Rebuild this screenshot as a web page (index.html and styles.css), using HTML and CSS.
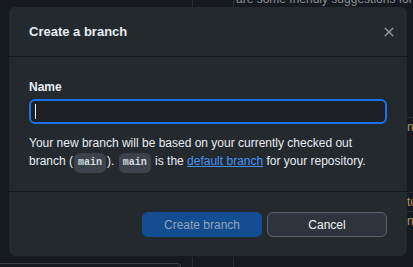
FILE: index.html
```html
<!DOCTYPE html>
<html>
  <head>
    <title>Create a branch</title>
    <link rel="stylesheet" href="styles.css">
  </head>
  <body>
    <!-- page behind the dialog -->
    <div class="backdrop">
      <div class="top-row">
        <div class="col col-a"></div>
        <div class="col col-b"></div>
        <div class="col col-c"><span class="faded">are some friendly suggestions for</span></div>
      </div>
      <div class="side">
        <div class="side-item">ni</div>
        <div class="side-item">to</div>
        <div class="side-item">ni</div>
      </div>
      <div class="bottom-row">
        <div class="box"></div>
        <div class="col col-b"></div>
        <div class="col col-c"></div>
      </div>
    </div>

    <div class="dialog">
      <div class="dialog-header">
        <h2 class="dialog-title">Create a branch</h2>
        <button class="close-btn" aria-label="Close">
          <svg width="16" height="16" viewBox="0 0 16 16">
            <path d="M3.72 3.72a.75.75 0 0 1 1.06 0L8 6.94l3.22-3.22a.749.749 0 0 1 1.06 1.06L9.06 8l3.22 3.22a.749.749 0 0 1-1.06 1.06L8 9.06l-3.22 3.22a.749.749 0 0 1-1.06-1.06L6.94 8 3.72 4.78a.75.75 0 0 1 0-1.06Z" fill="currentColor"></path>
          </svg>
        </button>
      </div>
      <div class="dialog-body">
        <label for="branch-name">Name</label>
        <div class="input-wrap">
          <input type="text" id="branch-name" />
          <span class="caret"></span>
        </div>
        <p class="note">
          Your new branch will be based on your currently checked out
          branch (<code>main</code>). <code>main</code> is the
          <a href="#">default branch</a> for your repository.
        </p>
      </div>
      <div class="dialog-footer">
        <button class="btn btn-primary" disabled>Create branch</button>
        <button class="btn">Cancel</button>
      </div>
    </div>
  </body>
</html>
```

FILE: styles.css
```css
body {
  margin: 0;
  background-color: #16191d;
  font-family: "Segoe UI", "Liberation Sans", Arial, sans-serif;
  color: #e6edf3;
  overflow: hidden;
}
.backdrop {
  position: relative;
  height: 267px;
}
.top-row {
  display: flex;
  height: 8px;
}
.col {
  height: 100%;
}
.col-a {
  width: 192px;
  border-right: 1px solid #2a2e34;
}
.col-b {
  width: 40px;
  border-right: 1px solid #2a2e34;
}
.col-c {
  flex: 1;
  overflow: hidden;
}
.faded {
  display: block;
  margin-top: -8px;
  padding-left: 2px;
  font-size: 12px;
  color: #8b8f94;
  white-space: nowrap;
}
.side {
  position: absolute;
  left: 407px;
  top: 117px;
  width: 6px;
  font-size: 12px;
  color: #b7915c;
  overflow: hidden;
}
.side-item {
  border-top: 1px solid #2a2e34;
  height: 18px;
  line-height: 18px;
  margin-bottom: 10px;
}
.side-item:nth-child(2) {
  margin-top: 56px;
  margin-bottom: 0;
}
.bottom-row {
  position: absolute;
  left: 0;
  top: 257px;
  display: flex;
  width: 100%;
  height: 10px;
}
.box {
  width: 180px;
  margin-top: 6px;
  border-top: 1px solid #3a3f45;
  border-right: 1px solid #3a3f45;
  border-top-right-radius: 6px;
  margin-right: 11px;
}
.bottom-row .col-b {
  width: 40px;
  border-left: 1px solid #2a2e34;
  border-right: 1px solid #2a2e34;
}

.dialog {
  position: absolute;
  left: 9px;
  top: 7px;
  width: 398px;
  height: 249px;
  background-color: #24292e;
  border-radius: 6px;
  display: flex;
  flex-direction: column;
}
.dialog-header {
  display: flex;
  align-items: center;
  justify-content: space-between;
  padding: 16px 10px 16px 20px;
  border-bottom: 1px solid #16181b;
}
.dialog-title {
  margin: 0;
  font-size: 13px;
  line-height: 17px;
  font-weight: bold;
  color: #e6edf3;
}
.close-btn {
  background: none;
  border: none;
  padding: 0;
  width: 16px;
  height: 16px;
  color: #8d96a0;
  cursor: pointer;
}
.dialog-body {
  padding: 21px 20px 20px 20px;
  border-bottom: 1px solid #16181b;
}
label {
  display: block;
  font-size: 12px;
  line-height: 18px;
  font-weight: 600;
  margin-bottom: 3px;
  color: #e6edf3;
}
.input-wrap {
  position: relative;
}
input {
  box-sizing: border-box;
  width: 100%;
  height: 25px;
  background-color: #1d2125;
  border: 2px solid #1f6feb;
  border-radius: 6px;
  outline: none;
}
.caret {
  position: absolute;
  left: 6px;
  top: 5px;
  width: 1px;
  height: 15px;
  background-color: #e6edf3;
}
.note {
  margin: 10px 0 0 0;
  font-size: 12px;
  line-height: 18px;
  color: #e6edf3;
}
code {
  display: inline-block;
  font-family: "Liberation Mono", "DejaVu Sans Mono", monospace;
  font-size: 10px;
  line-height: 14px;
  font-weight: bold;
  padding: 3px 4px;
  margin: -2px 1px;
  background-color: #3d434b;
  border-radius: 6px;
  color: #d6dbe0;
}
a {
  color: #4493f8;
}
.dialog-footer {
  flex: 1;
  display: flex;
  justify-content: flex-end;
  gap: 5px;
  padding: 20px 20px 0 0;
}
.btn {
  width: 120px;
  height: 25px;
  font-family: inherit;
  font-size: 12px;
  color: #f0f3f6;
  background-color: #2e343b;
  border: 1px solid #5b626b;
  border-radius: 6px;
  cursor: pointer;
}
.btn-primary {
  background-color: #134c90;
  border-color: #134c90;
  color: #8fa3ba;
}
```
